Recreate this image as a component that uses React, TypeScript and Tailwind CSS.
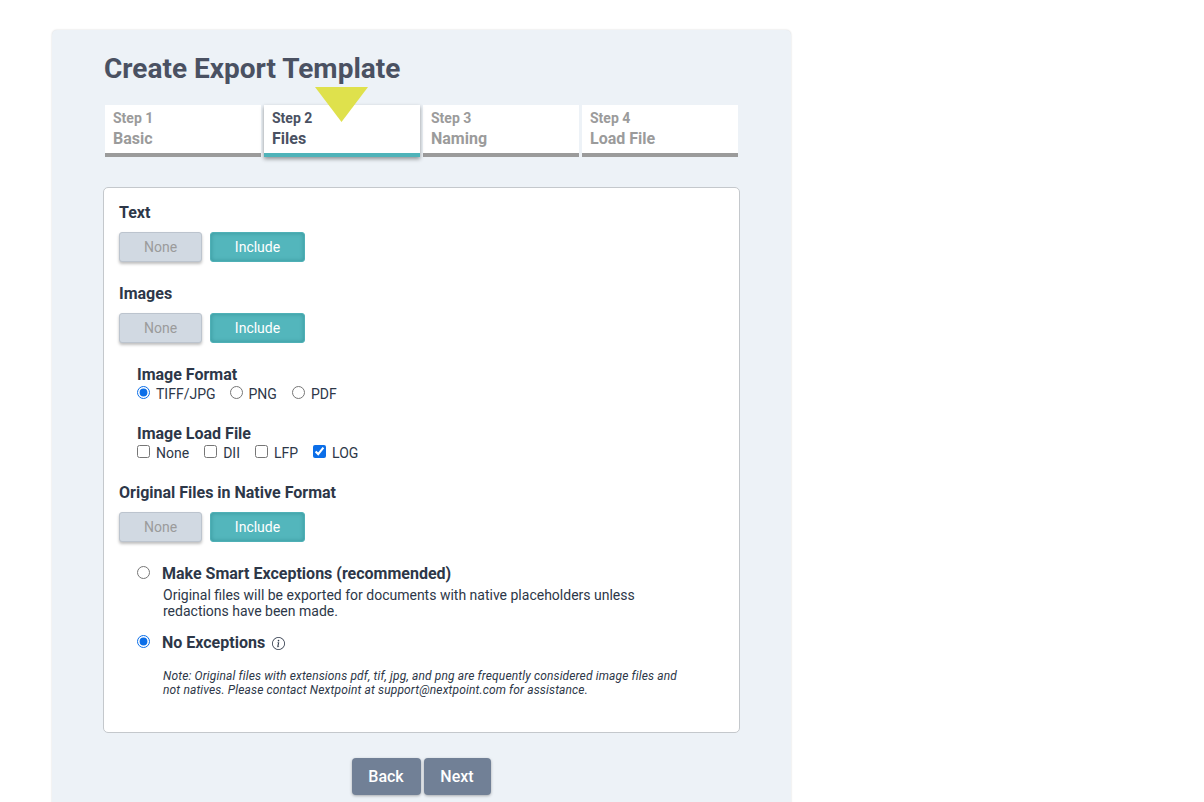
import { BsInfoCircle } from "react-icons/bs";

const steps = [
  { step: "Step 1", name: "Basic" },
  { step: "Step 2", name: "Files", active: true },
  { step: "Step 3", name: "Naming" },
  { step: "Step 4", name: "Load File" },
];

function StepTab({ step, name, active }: { step: string; name: string; active?: boolean }) {
  return (
    <div
      className={
        active
          ? "relative w-[156px] h-[52px] bg-white border-b-4 border-[#4fb3b9] pl-[8px] pt-[5px] shadow-[0_2px_4px_rgba(0,0,0,0.4)]"
          : "w-[156px] h-[52px] bg-white border-b-4 border-[#9b9b9b] pl-[8px] pt-[5px]"
      }
    >
      <div className={`text-[14px] leading-[16px] font-bold ${active ? "text-[#4a5162]" : "text-[#9b9b9b]"}`}>{step}</div>
      <div className={`mt-[2px] text-[16px] leading-[21px] font-bold ${active ? "text-[#4a5162]" : "text-[#9b9b9b]"}`}>{name}</div>
      {active && (
        <svg className="absolute left-[51px] top-[-18px]" width="53" height="35" viewBox="0 0 53 35">
          <polygon points="0,0 53,0 26.5,35" fill="#dfe14c" />
        </svg>
      )}
    </div>
  );
}

function Toggle() {
  return (
    <div className="flex gap-[8px] mt-[9px]">
      <button className="w-[83px] h-[30px] rounded-[3px] bg-[#d1d9e2] border border-[#bcc4ce] text-[14px] text-[#9b9b9b] shadow-[0_2px_3px_rgba(0,0,0,0.25)]">
        None
      </button>
      <button className="w-[95px] h-[30px] rounded-[3px] bg-[#53b6bc] border border-[#4fb0b6] text-[14px] text-white shadow-[inset_0_0_4px_rgba(0,90,95,0.35)]">
        Include
      </button>
    </div>
  );
}

function SectionLabel({ children }: { children: React.ReactNode }) {
  return <div className="text-[16px] leading-[20px] font-bold text-[#2d3748]">{children}</div>;
}

function Choice({ type, label, name, checked, className }: { type: string; label: string; name?: string; checked?: boolean; className?: string }) {
  return (
    <label className={`flex items-center text-[14px] leading-[16px] text-[#2d3748] ${className ?? ""}`}>
      <input type={type} name={name} defaultChecked={checked} className="w-[13px] h-[13px] m-0 mr-[6px] mb-[3px] accent-[#0b6ee8]" />
      {label}
    </label>
  );
}

export default function App() {
  return (
    <div className="h-[802px] overflow-hidden bg-white font-['Roboto',sans-serif]">
      <div className="ml-[52px] mt-[30px] w-[739px] h-[900px] float-left bg-[#edf2f7] rounded-[5px] shadow-[0_0_2px_rgba(0,0,0,0.18)] pl-[51px] pr-[51px] pt-[21px]">
        <h1 className="pl-[1px] text-[28px] leading-[36px] font-bold text-[#4a5162]">Create Export Template</h1>
        <div className="flex gap-[3px] mt-[18px] ml-[2px]">
          {steps.map((s) => (
            <StepTab key={s.step} {...s} />
          ))}
        </div>
        <div className="mt-[30px] w-[637px] h-[546px] bg-white border border-[#c4c8cc] rounded-[5px] pl-[15px] pt-[15px]">
          <SectionLabel>Text</SectionLabel>
          <Toggle />
          <div className="mt-[22px]">
            <SectionLabel>Images</SectionLabel>
            <Toggle />
          </div>
          <div className="ml-[18px] mt-[22px]">
            <SectionLabel>Image Format</SectionLabel>
            <div className="flex mt-[1px]">
              <Choice type="radio" name="format" label="TIFF/JPG" checked className="mr-[14px]" />
              <Choice type="radio" name="format" label="PNG" className="mr-[15px]" />
              <Choice type="radio" name="format" label="PDF" />
            </div>
          </div>
          <div className="ml-[18px] mt-[22px]">
            <SectionLabel>Image Load File</SectionLabel>
            <div className="flex mt-[1px]">
              <Choice type="checkbox" label="None" className="mr-[15px]" />
              <Choice type="checkbox" label="DII" className="mr-[15px]" />
              <Choice type="checkbox" label="LFP" className="mr-[15px]" />
              <Choice type="checkbox" label="LOG" checked />
            </div>
          </div>
          <div className="mt-[22px]">
            <SectionLabel>Original Files in Native Format</SectionLabel>
            <Toggle />
          </div>
          <div className="ml-[18px] mt-[22px]">
            <label className="flex items-center text-[16px] leading-[20px] font-bold text-[#2d3748]">
              <input type="radio" name="native" className="w-[13px] h-[13px] m-0 mr-[12px] mb-[3px] accent-[#0b6ee8]" />
              Make Smart Exceptions (recommended)
            </label>
            <p className="ml-[26px] mt-[3px] w-[490px] text-[14px] leading-[16px] text-[#2d3748]">
              Original files will be exported for documents with native placeholders unless redactions have been made.
            </p>
            <label className="flex items-center mt-[14px] text-[16px] leading-[20px] font-bold text-[#2d3748]">
              <input type="radio" name="native" defaultChecked className="w-[13px] h-[13px] m-0 mr-[12px] mb-[3px] accent-[#0b6ee8]" />
              No Exceptions
              <BsInfoCircle className="ml-[7px] w-[13px] h-[13px] text-[#2d3748]" />
            </label>
            <p className="ml-[26px] mt-[16px] w-[530px] text-[12px] tracking-[0.14px] leading-[14px] italic text-[#2d3748]">
              Note: Original files with extensions pdf, tif, jpg, and png are frequently considered image files and not natives. Please contact Nextpoint at support@nextpoint.com for assistance.
            </p>
          </div>
        </div>
        <div className="flex justify-center gap-[3px] mt-[25px] ml-[-1px]">
          <button className="w-[69px] h-[37px] rounded-[4px] bg-[#718096] text-[16px] font-medium text-white shadow-[0_1px_3px_rgba(0,0,0,0.3)]">Back</button>
          <button className="w-[67px] h-[37px] rounded-[4px] bg-[#718096] text-[16px] font-medium text-white shadow-[0_1px_3px_rgba(0,0,0,0.3)]">Next</button>
        </div>
      </div>
    </div>
  );
}
